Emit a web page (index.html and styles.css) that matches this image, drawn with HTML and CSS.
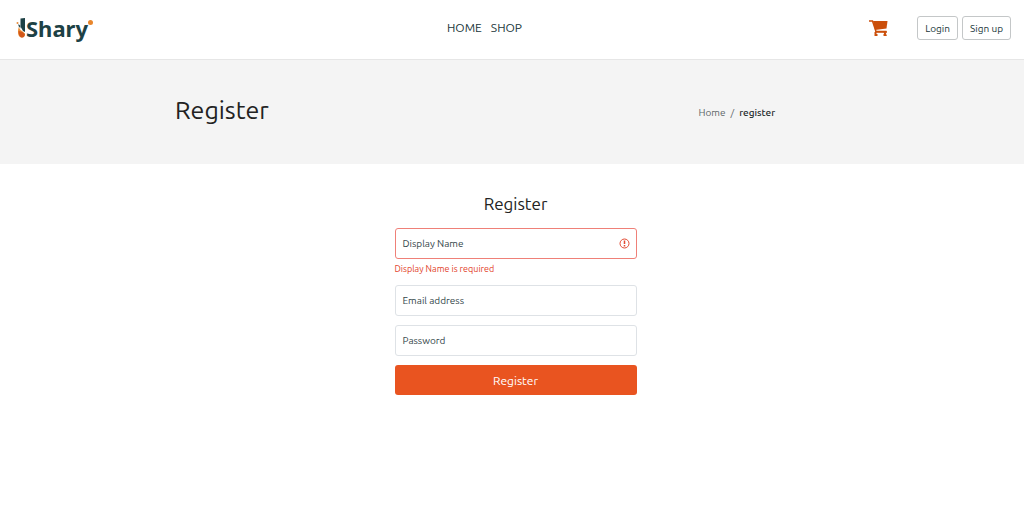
FILE: index.html
```html
<!DOCTYPE html>
<html lang="en">
<head>
  <meta charset="UTF-8">
  <meta name="viewport" content="width=device-width, initial-scale=1.0">
  <title>Shary - Register</title>
  <link rel="stylesheet" href="styles.css">
</head>
<body>
  <header class="navbar">
    <a class="logo" href="#">
      <svg class="logo-mark" width="10" height="22" viewBox="0 0 20 44" aria-hidden="true">
        <path d="M9 3l9-1v28l-4-2-5-9z" fill="#1d4145"/>
        <circle cx="3" cy="12" r="2" fill="#e58a3a"/>
        <path d="M5 14l3 3 1 6-4-5z" fill="#1d4145"/>
        <path d="M6 19c0 5 3 7 6 9l6 5c0 5-2 8-6 8-6 0-8-5-8-12 0-4 1-7 2-10z" fill="#ec9038"/>
        <path d="M5 28l8 2 5 5c-1 4-3 7-7 6-4-1-6-6-6-13z" fill="#d2571a"/>
      </svg>
      <span class="logo-text">Shary</span>
      <span class="logo-dot"></span>
    </a>
    <nav class="menu">
      <a href="#">HOME</a>
      <a href="#">SHOP</a>
    </nav>
    <div class="actions">
      <a class="cart" href="#" aria-label="Cart">
        <svg width="19" height="16" viewBox="0 0 38 32" fill="none" stroke="#cb4f0b" aria-hidden="true">
          <path d="M0 2h7l7 21h21" stroke-width="3"/>
          <path d="M8 2h29l-2 15-23 3z" fill="#cb4f0b" stroke="none"/>
          <path d="M12 24h24" stroke-width="3"/>
          <path d="M13 24v6h4M31 24l2 6h-4" stroke-width="4"/>
        </svg>
      </a>
      <button class="btn-outline" type="button">Login</button>
      <button class="btn-outline" type="button">Sign up</button>
    </div>
  </header>

  <section class="hero">
    <h1>Register</h1>
    <nav class="breadcrumb" aria-label="breadcrumb">
      <a href="#">Home</a>
      <span>/</span>
      <span class="active">register</span>
    </nav>
  </section>

  <main class="content">
    <form class="register-form" novalidate>
      <h2>Register</h2>
      <div class="field">
        <input class="invalid" type="text" id="displayName">
        <label for="displayName">Display Name</label>
        <svg class="error-icon" width="11" height="11" viewBox="0 0 22 22" fill="none" stroke="#e24a32" aria-hidden="true">
          <circle cx="11" cy="11" r="9" stroke-width="2"/>
          <path d="M11 5v7M11 14v3" stroke-width="3"/>
        </svg>
      </div>
      <p class="error">Display Name is required</p>
      <div class="field">
        <input type="email" id="email">
        <label for="email">Email address</label>
      </div>
      <div class="field">
        <input type="password" id="password">
        <label for="password">Password</label>
      </div>
      <button class="btn-submit" type="submit">Register</button>
    </form>
  </main>
</body>
</html>
```
FILE: styles.css
```css
*{
  box-sizing: border-box;
}
body{
  margin: 0;
  font-family: Ubuntu, "Noto Sans", sans-serif;
  font-size: 10px;
  color: #222;
  background-color: #fff;
}
a{
  color: inherit;
  text-decoration: none;
}
h1, h2, p{
  margin: 0;
  font-weight: 400;
}
/* top bar */
.navbar{
  display: grid;
  grid-template-columns: 1fr auto 1fr;
  align-items: start;
  height: 60px;
  padding: 16px 13px 0 16px;
  border-bottom: 1px solid #e6e6e6;
}
.logo{
  display: flex;
  height: 24px;
  align-items: center;
  color: #1d4145;
}
.logo-text{
  font-family: "Noto Sans", sans-serif;
  font-size: 22px;
  font-weight: 700;
  line-height: 24px;
}
.logo-dot{
  width: 5px;
  height: 5px;
  margin-bottom: 12px;
  border-radius: 50%;
  background-color: #e8862c;
}
.menu{
  display: flex;
  gap: 9px;
  margin-right: 58px;
  font-size: 12px;
  line-height: 24px;
  color: #20363a;
}
.actions{
  display: flex;
  justify-content: flex-end;
  align-items: center;
  gap: 4px;
}
.cart{
  display: flex;
  margin-right: 25px;
}
.btn-outline{
  height: 24px;
  padding: 0 7px;
  border: 1px solid #c4c7c8;
  border-radius: 3px;
  background-color: #fff;
  color: #20363a;
  font-family: inherit;
  font-size: 10px;
}
/* page title */
.hero{
  display: flex;
  justify-content: space-between;
  align-items: center;
  padding: 34px 24.3% 38px 17.1%;
  background-color: #f4f4f4;
}
.hero h1{
  font-size: 25px;
  line-height: 32px;
}
.breadcrumb{
  display: flex;
  gap: 5px;
  margin-top: 4px;
  color: #5c6668;
}
.breadcrumb .active{
  color: #1c2a2c;
  font-weight: 500;
}
/* form */
.content{
  display: flex;
  justify-content: center;
  padding: 28px 0 28px 7px;
}
.register-form{
  display: flex;
  flex-direction: column;
  width: 242px;
}
.register-form h2{
  margin-bottom: 12px;
  font-size: 17px;
  line-height: 24px;
  text-align: center;
}
.field{
  position: relative;
  margin-bottom: 9px;
}
.field input{
  display: block;
  width: 100%;
  height: 31px;
  padding: 0 8px;
  border: 1px solid #dee2e6;
  border-radius: 3px;
  font: inherit;
}
.field .invalid{
  padding-right: 24px;
  border-color: #ef8078;
}
.field label{
  position: absolute;
  top: 0;
  left: 8px;
  line-height: 31px;
  color: #34464a;
}
.error-icon{
  position: absolute;
  top: 10px;
  right: 7px;
}
.error{
  margin: -5px 0 10px;
  font-size: 9px;
  line-height: 12px;
  color: #e2432b;
}
.btn-submit{
  height: 30px;
  border: 0;
  border-radius: 3px;
  background-color: #e95420;
  color: #fff;
  font-family: inherit;
  font-size: 12px;
}
```
